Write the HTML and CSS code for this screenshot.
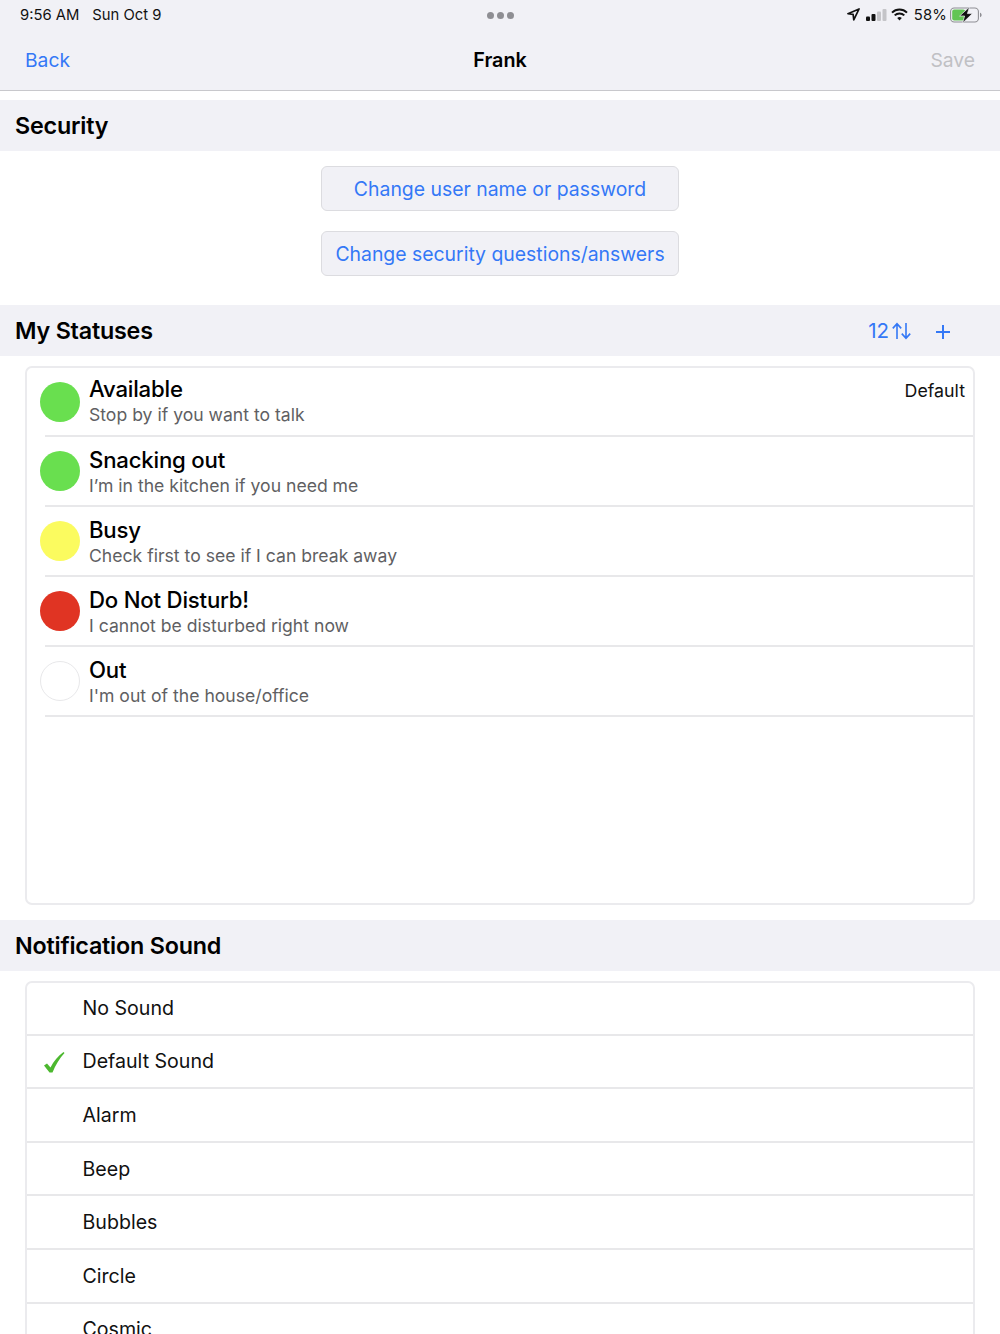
FILE: index.html
```html
<!DOCTYPE html>
<html lang="en">
<head>
    <meta charset="UTF-8">
    <meta name="viewport" content="width=device-width, initial-scale=1.0">
    <title>Frank</title>
    <link rel="stylesheet" href="styles.css">
</head>
<body>
    <div class="main">
        <header class="top-bar">
            <div class="status-bar">
                <div class="status-left">
                    <span>9:56 AM</span>
                    <span>Sun Oct 9</span>
                </div>
                <div class="status-dots"><i></i><i></i><i></i></div>
                <div class="status-right">
                    <svg class="icon-location" width="13" height="13" viewBox="0 0 14 14"><path d="M13 1 1 6.2l5.6.6.7 6z" fill="none" stroke="#111" stroke-width="1.8" stroke-linejoin="round"/></svg>
                    <svg class="icon-signal" width="21" height="12" viewBox="0 0 21 12">
                        <rect x="0" y="7.5" width="4" height="4.5" rx="1" fill="#111"/>
                        <rect x="5.5" y="5" width="4" height="7" rx="1" fill="#111"/>
                        <rect x="11" y="2.5" width="4" height="9.5" rx="1" fill="#c4c4c8"/>
                        <rect x="16.5" y="0" width="4" height="12" rx="1" fill="#c4c4c8"/>
                    </svg>
                    <svg class="icon-wifi" width="17" height="13" viewBox="0 0 17 13" fill="none" stroke="#111" stroke-width="2">
                        <path d="M1 4.6a10.6 10.6 0 0 1 15 0"/>
                        <path d="M3.7 7.4a6.8 6.8 0 0 1 9.6 0"/>
                        <path d="M8.5 12.6 6.2 10a3.3 3.3 0 0 1 4.6 0z" fill="#111" stroke="none"/>
                    </svg>
                    <span class="battery-text">58%</span>
                    <svg class="icon-battery" width="32" height="16" viewBox="0 0 32 16">
                        <rect x="0.6" y="1" width="27.8" height="14" rx="3.6" fill="none" stroke="#8e8e93" stroke-width="1.1"/>
                        <rect x="2.2" y="2.6" width="13" height="10.8" rx="2" fill="#62c554"/>
                        <path d="M30 5.8c1.2.4 1.6 1.2 1.6 2.2s-.4 1.8-1.6 2.2z" fill="#8e8e93"/>
                        <path d="M19.5 0 9.6 9h5L12.6 16 22.4 6.6h-5z" fill="#111" stroke="#f1f1f6" stroke-width="0.7"/>
                    </svg>
                </div>
            </div>
            <nav class="nav-bar">
                <a class="nav-link">Back</a>
                <h1>Frank</h1>
                <a class="nav-link nav-disabled">Save</a>
            </nav>
        </header>

        <section class="section section-security">
            <h2 class="section-head">Security</h2>
            <div class="button-stack">
                <button class="plain-btn">Change user name or password</button>
                <button class="plain-btn">Change security questions/answers</button>
            </div>
        </section>

        <section class="section">
            <div class="section-head">
                <h2>My Statuses</h2>
                <div class="head-actions">
                    <span class="sort-btn">12<svg width="19" height="18" viewBox="0 0 19 18" fill="none" stroke="#3478f6" stroke-width="1.6"><path d="M5 17V2M.8 6.4 5 1.6l4.2 4.8"/><path d="M14 1v15M9.8 11.6l4.2 4.8 4.2-4.8"/></svg></span>
                    <svg class="add-btn" width="14" height="14" viewBox="0 0 14 14" stroke="#3478f6" stroke-width="2"><path d="M7 0v14M0 7h14"/></svg>
                </div>
            </div>
            <div class="card status-card">
                <div class="status-row">
                    <span class="dot dot-green"></span>
                    <div class="status-text">
                        <div class="status-name">Available</div>
                        <div class="status-desc">Stop by if you want to talk</div>
                    </div>
                    <span class="status-default">Default</span>
                </div>
                <div class="status-row">
                    <span class="dot dot-green"></span>
                    <div class="status-text">
                        <div class="status-name">Snacking out</div>
                        <div class="status-desc">I’m in the kitchen if you need me</div>
                    </div>
                </div>
                <div class="status-row">
                    <span class="dot dot-yellow"></span>
                    <div class="status-text">
                        <div class="status-name">Busy</div>
                        <div class="status-desc">Check first to see if I can break away</div>
                    </div>
                </div>
                <div class="status-row">
                    <span class="dot dot-red"></span>
                    <div class="status-text">
                        <div class="status-name">Do Not Disturb!</div>
                        <div class="status-desc">I cannot be disturbed right now</div>
                    </div>
                </div>
                <div class="status-row">
                    <span class="dot dot-empty"></span>
                    <div class="status-text">
                        <div class="status-name">Out</div>
                        <div class="status-desc">I'm out of the house/office</div>
                    </div>
                </div>
            </div>
        </section>

        <section class="section">
            <h2 class="section-head">Notification Sound</h2>
            <div class="card sound-card">
                <div class="sound-row">No Sound</div>
                <div class="sound-row">
                    <svg class="check" width="22" height="24" viewBox="0 0 22 24"><path d="M1 14.5 4 12.5 7.5 16.5C10.5 10.5 15 5 20.5 1L21.5 2C16.5 7.5 12.5 14 9.5 21.5H6.5z" fill="#4cb82f"/></svg>
                    Default Sound
                </div>
                <div class="sound-row">Alarm</div>
                <div class="sound-row">Beep</div>
                <div class="sound-row">Bubbles</div>
                <div class="sound-row">Circle</div>
                <div class="sound-row">Cosmic</div>
            </div>
        </section>
    </div>
</body>
</html>
```

FILE: styles.css
```css
* {
    margin: 0;
    padding: 0;
    box-sizing: border-box;
    font-family: 'Inter', 'Liberation Sans', sans-serif;
}

html, body {
    height: 1334px;
    overflow: hidden;
}

body {
    background: #ffffff;
    color: #000000;
}

.main {
    width: 1000px;
    height: 1334px;
    overflow: hidden;
}

.top-bar {
    height: 91px;
    background: #f1f1f6;
    border-bottom: 1px solid #c8c8cc;
    margin-bottom: 9px;
}

.status-bar {
    height: 30px;
    display: flex;
    align-items: center;
    justify-content: space-between;
    padding: 0 18px 1px 20px;
    position: relative;
    font-size: 14.8px;
    color: #111111;
}

.status-left {
    display: flex;
    gap: 13px;
}

.status-dots {
    position: absolute;
    left: 487px;
    top: 12px;
    display: flex;
    gap: 3px;
}

.status-dots i {
    width: 7px;
    height: 7px;
    border-radius: 50%;
    background: #8e8e93;
}

.status-right {
    display: flex;
    align-items: center;
}

.icon-location {
    margin-right: 6px;
}

.icon-signal {
    margin-right: 4px;
}

.icon-wifi {
    margin-right: 6px;
}

.battery-text {
    margin-right: 3px;
    letter-spacing: 0.2px;
}

.nav-bar {
    height: 60px;
    display: flex;
    align-items: center;
    justify-content: space-between;
    padding: 0 25px 1px 25px;
    position: relative;
}

.nav-bar h1 {
    position: absolute;
    left: 0;
    right: 0;
    text-align: center;
    font-size: 19.8px;
    font-weight: 600;
}

.nav-link {
    font-size: 19.3px;
    color: #3478f6;
}

.nav-disabled {
    color: #c0c0c4;
}

.section-head {
    height: 51px;
    background: #f1f1f6;
    padding: 0 50px 0 15px;
    display: flex;
    align-items: center;
    justify-content: space-between;
    font-size: 23.3px;
    font-weight: 600;
    letter-spacing: -0.2px;
}

.section-head h2 {
    font-size: 23.3px;
    font-weight: 600;
}

.section-security {
    height: 205px;
}

.button-stack {
    display: flex;
    flex-direction: column;
    align-items: center;
    gap: 20px;
    padding-top: 15px;
}

.plain-btn {
    width: 358px;
    height: 45px;
    background: #f1f1f6;
    border: 1px solid #dcdce0;
    border-radius: 6px;
    font-size: 19.4px;
    color: #3478f6;
}

.head-actions {
    display: flex;
    align-items: center;
    gap: 25px;
}

.sort-btn {
    display: flex;
    align-items: center;
    gap: 3px;
    font-size: 20.5px;
    font-weight: 400;
    color: #3478f6;
    letter-spacing: 0;
}

.add-btn {
    margin-top: 3px;
}

.card {
    margin: 10px 25px 0;
    border: 2px solid #ebebee;
    border-radius: 7px;
    background: #ffffff;
}

.status-card {
    height: 539px;
    padding-left: 14px;
    margin-bottom: 15px;
}

.status-row {
    height: 70px;
    display: flex;
    align-items: center;
    position: relative;
    border-bottom: 2px solid #e8e8ea;
    margin-left: 4px;
    padding-left: 44px;
}

.status-row:first-child {
    height: 69px;
}

.status-row:first-child .status-text {
    margin-top: -4px;
}

.dot {
    position: absolute;
    left: -5px;
    top: 14px;
    width: 40px;
    height: 40px;
    border-radius: 50%;
}

.dot-green {
    background: #69df4f;
}

.dot-yellow {
    background: #fbfb5f;
}

.dot-red {
    background: #e03423;
}

.dot-empty {
    border: 1.5px solid #e8e8ea;
}

.status-text {
    flex: 1;
    padding-top: 1px;
}

.status-name {
    font-size: 22.2px;
    font-weight: 500;
    line-height: 28px;
    letter-spacing: -0.2px;
    margin-bottom: 1px;
}

.status-desc {
    font-size: 17.6px;
    line-height: 22px;
    color: #5f5f63;
}

.status-default {
    position: absolute;
    right: 8px;
    top: 12px;
    font-size: 17.8px;
    color: #111111;
}

.sound-row {
    height: 53.6px;
    display: flex;
    align-items: center;
    padding-left: 55.5px;
    position: relative;
    border-bottom: 2px solid #e8e8ea;
    font-size: 19.6px;
    color: #111111;
}

.sound-row:first-child {
    height: 52.6px;
}

.check {
    position: absolute;
    left: 16px;
    top: 15px;
}
```
